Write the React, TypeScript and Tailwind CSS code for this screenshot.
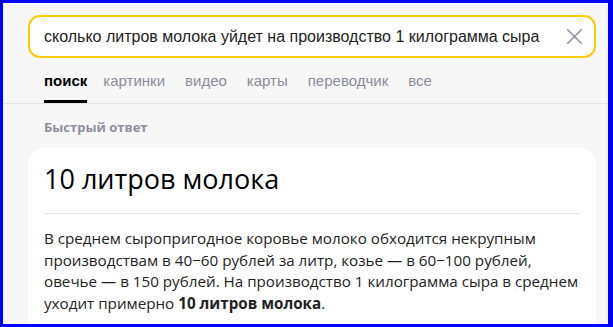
import { X } from "lucide-react";

const tabs = ["поиск", "картинки", "видео", "карты", "переводчик", "все"];

export default function App() {
  return (
    <div className="w-[613px] h-[327px] overflow-hidden border-[#0000ff] border-t-[3px] border-l-[3px] border-r-[5px] border-b-[3px] bg-[#f7f7f8]">
      <div className="pt-[12px] pl-[25px] pr-[12px]">
        <div className="flex h-[43px] items-center rounded-[12px] border-2 border-[#ffcc00] bg-white pl-[14px] pr-[6px]">
          <span className="flex-1 text-[16px] text-[#222] [font-family:'Liberation_Sans',Arial,sans-serif] whitespace-nowrap">
            сколько литров молока уйдет на производство 1 килограмма сыра
          </span>
          <X className="w-[27px] h-[27px] text-[#9696a3]" strokeWidth={1.5} />
        </div>
      </div>

      <div className="flex gap-[20px] pl-[41px] mt-[14px] border-b border-[#e4e4e8] [font-family:'Liberation_Sans',Arial,sans-serif] text-[15px] leading-[17px]">
        {tabs.map((t, i) => (
          <div
            key={t}
            className={
              i === 0
                ? "mr-[-4px] pb-[11px] border-b-[3px] border-black font-bold text-black"
                : "pb-[11px] border-b-[3px] border-transparent text-[#8c8c9b]"
            }
          >
            {t}
          </div>
        ))}
      </div>

      <div className="pl-[25px] pr-[12px] [font-family:'Open_Sans',sans-serif]">
        <div className="pl-[16px] pt-[14px] text-[13px] leading-[19px] font-bold text-[#8f8f9c]">Быстрый ответ</div>
        <div className="mt-[11px] rounded-[16px] bg-white px-[16px] pt-[15px] pb-[20px]">
          <div className="text-[27px] font-medium text-black leading-[32px] pb-[18px] border-b border-[#e4e4e8]">
            10 литров молока
          </div>
          <p className="mt-[14px] text-[15.2px] leading-[21.7px] text-[#222]">
            В среднем сыропригодное коровье молоко обходится некрупным производствам в 40−60 рублей за литр, козье — в 60−100 рублей, овечье — в 150 рублей. На производство 1 килограмма сыра в среднем уходит примерно <b>10 литров молока</b>.
          </p>
        </div>
      </div>
    </div>
  );
}
